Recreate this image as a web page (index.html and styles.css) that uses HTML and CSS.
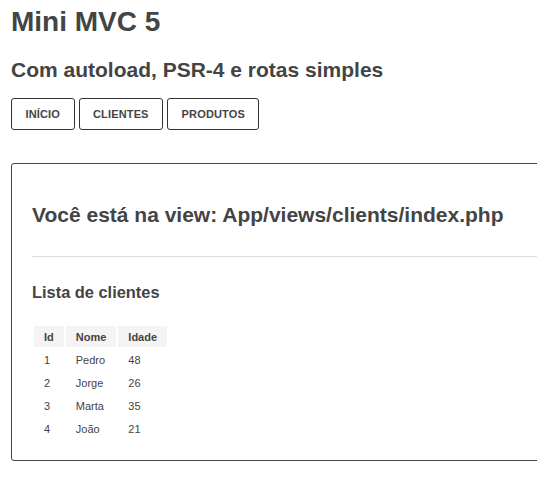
FILE: index.html
```html
<!DOCTYPE html>
<html lang="pt-BR">
<head>
<meta charset="utf-8">
<title>Mini MVC 5</title>
<link rel="stylesheet" href="styles.css">
</head>
<body>
<div class="page">
  <h1 class="title">Mini MVC 5</h1>
  <h2 class="subtitle">Com autoload, PSR-4 e rotas simples</h2>
  <nav class="nav">
    <a class="btn" href="#">Início</a>
    <a class="btn" href="#">Clientes</a>
    <a class="btn" href="#">Produtos</a>
  </nav>
  <section class="panel">
    <h2 class="view-title">Você está na view: App/views/clients/index.php</h2>
    <hr class="divider">
    <h3 class="list-title">Lista de clientes</h3>
    <table class="table">
      <thead>
        <tr><th>Id</th><th>Nome</th><th>Idade</th></tr>
      </thead>
      <tbody>
        <tr><td>1</td><td>Pedro</td><td>48</td></tr>
        <tr><td>2</td><td>Jorge</td><td>26</td></tr>
        <tr><td>3</td><td>Marta</td><td>35</td></tr>
        <tr><td>4</td><td>João</td><td>21</td></tr>
      </tbody>
    </table>
  </section>
</div>
</body>
</html>
```
FILE: styles.css
```css
html, body {
  margin: 0;
  padding: 0;
  background: #fff;
}
body {
  font-family: "Liberation Sans", Arial, sans-serif;
  color: #444;
}
.page {
  padding: 6px 11px 0 11px;
}
.title {
  margin: 0;
  font-size: 28px;
  line-height: 32px;
  font-weight: bold;
}
.subtitle {
  margin: 20px 0 0 0;
  font-size: 21px;
  line-height: 24px;
  font-weight: bold;
}
.nav {
  display: flex;
  gap: 4px;
  margin-top: 16px;
}
.btn {
  display: flex;
  align-items: center;
  height: 30px;
  padding: 0 13.5px;
  border: 1px solid #333;
  border-radius: 3px;
  color: #444;
  text-decoration: none;
  text-transform: uppercase;
  font-size: 11px;
  font-weight: bold;
  letter-spacing: 0.15px;
}
.panel {
  width: 100%;
  margin-top: 33px;
  padding: 1px 20px 19px 20px;
  border: 1px solid #444;
  border-radius: 3px;
}
.view-title {
  margin: 38px 0 0 0;
  font-size: 21px;
  line-height: 24px;
  font-weight: bold;
}
.divider {
  margin: 29px 0 0 0;
  border: 0;
  border-top: 1px solid #ddd;
}
.list-title {
  margin: 26px 0 0 0;
  font-size: 16.4px;
  line-height: 19px;
  font-weight: bold;
}
.table {
  margin-top: 22px;
  border-spacing: 2px;
  font-size: 11px;
  color: #444;
}
.table th,
.table td {
  padding: 0 10px;
  height: 21px;
  text-align: left;
}
.table th {
  background: #f4f4f4;
  font-weight: bold;
}
```
